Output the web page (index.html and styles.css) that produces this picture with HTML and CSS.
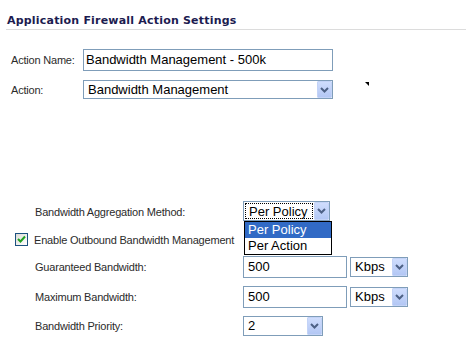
FILE: index.html
```html
<!DOCTYPE html>
<html lang="en">
<head>
  <meta charset="UTF-8" />
  <title>Application Firewall Action Settings</title>
  <link rel="stylesheet" href="styles.css">
</head>
<body>
  <h2 class="title">Application Firewall Action Settings</h2>

  <div class="action">
    <div class="row row-name">
      <span class="lbl">Action Name:</span>
      <div class="box name">Bandwidth Management - 500k</div>
    </div>
    <div class="row row-action">
      <span class="lbl">Action:</span>
      <div class="box sel action-sel">
        <span class="val">Bandwidth Management</span>
        <span class="btn"><svg width="9" height="6" viewBox="0 0 9 6"><path d="M1 1 L4.5 4.5 L8 1" fill="none" stroke="#4d6185" stroke-width="2"/></svg></span>
      </div>
      <span class="mark"></span>
    </div>
  </div>

  <div class="bw">
    <div class="row field agg">
      <span class="lbl">Bandwidth Aggregation Method:</span>
      <div class="box sel agg-sel">
        <span class="val"><span class="focus">Per Policy</span></span>
        <span class="btn"><svg width="9" height="6" viewBox="0 0 9 6"><path d="M1 1 L4.5 4.5 L8 1" fill="none" stroke="#4d6185" stroke-width="2"/></svg></span>
        <ul class="list">
          <li class="on">Per Policy</li>
          <li>Per Action</li>
        </ul>
      </div>
    </div>

    <div class="check-row">
      <span class="check"><svg width="11" height="11" viewBox="0 0 11 11"><path d="M2 5 L4.5 7.5 L9 2.5" fill="none" stroke="#21a121" stroke-width="2"/></svg></span>
      <span class="check-lbl">Enable Outbound Bandwidth Management</span>
    </div>

    <div class="row field">
      <span class="lbl">Guaranteed Bandwidth:</span>
      <div class="box num">500</div>
      <div class="box sel unit">
        <span class="val">Kbps</span>
        <span class="btn"><svg width="9" height="6" viewBox="0 0 9 6"><path d="M1 1 L4.5 4.5 L8 1" fill="none" stroke="#4d6185" stroke-width="2"/></svg></span>
      </div>
    </div>

    <div class="row field">
      <span class="lbl">Maximum Bandwidth:</span>
      <div class="box num">500</div>
      <div class="box sel unit">
        <span class="val">Kbps</span>
        <span class="btn"><svg width="9" height="6" viewBox="0 0 9 6"><path d="M1 1 L4.5 4.5 L8 1" fill="none" stroke="#4d6185" stroke-width="2"/></svg></span>
      </div>
    </div>

    <div class="row field">
      <span class="lbl">Bandwidth Priority:</span>
      <div class="box sel prio">
        <span class="val">2</span>
        <span class="btn"><svg width="9" height="6" viewBox="0 0 9 6"><path d="M1 1 L4.5 4.5 L8 1" fill="none" stroke="#4d6185" stroke-width="2"/></svg></span>
      </div>
    </div>
  </div>
</body>
</html>
```

FILE: styles.css
```css
body {margin:0; background:#fff; font-family:"Liberation Sans", Arial, sans-serif; font-size:11px; letter-spacing:-0.2px; color:#2b2b2b}

.title {margin:0 0 0 6px; padding:15px 0 2px 1px; line-height:12px; font-family:"DejaVu Sans", Verdana, sans-serif; font-size:11px; letter-spacing:0.2px; font-weight:bold; color:#1c1c50; border-bottom:1px solid #dcdcdc}

.row {display:flex; align-items:baseline}
.lbl {flex:none}

.action {margin-top:19px; padding-left:11px}
.action .lbl {width:72px}
.row-action {margin-top:9px}

.box {box-sizing:border-box; border:1px solid #7f9db9; background:#fff; color:#000; font-size:13px; letter-spacing:0}
.name {width:250px; height:22px; line-height:20px; padding-left:2px}

.sel {display:flex; align-items:stretch; position:relative}
.sel .val {flex:1; padding-left:4px; line-height:15px; padding-top:1px}
.sel .btn {flex:none; width:15px; display:flex; align-items:center; justify-content:center; box-sizing:border-box; border:1px solid #c3d3f7; border-radius:1px; background:linear-gradient(#cfddfd, #b3c7f4)}
.action-sel {width:250px; height:19px}

.mark {align-self:flex-start; margin:2px 0 0 32px; width:0; height:0; border-top:4px solid #000; border-left:4px solid transparent}

.bw {margin-top:102px}
.field {padding-left:35px}
.field .lbl {width:208px}
.field + .field {margin-top:8px}

.agg-sel {width:87px; height:20px}
.agg-sel .val {padding:1px}
.focus {display:block; height:16px; line-height:15px; padding-left:3px; box-sizing:border-box; border:1px dotted #000}
.list {position:absolute; left:0; top:calc(100% + 1px); width:88px; margin:0; padding:0; list-style:none; border:1px solid #000; background:#fff; box-sizing:border-box; z-index:2}
.list li {height:16px; line-height:16px; padding-left:3px}
.list li.on {background:#316ac5; color:#fff}

.check-row {display:flex; align-items:center; margin:12px 0 10px 15px; height:13px}
.check {box-sizing:border-box; width:13px; height:13px; border:1px solid #1c5180; background:linear-gradient(135deg, #dcdcd7, #fff); display:flex; align-items:center; justify-content:center}
.check-lbl {margin-left:6px}

.num {width:104px; height:22px; line-height:20px; padding-left:4px}
.unit {width:58px; height:20px; margin-left:3px; align-self:center}
.prio {width:80px; height:20px}
```
